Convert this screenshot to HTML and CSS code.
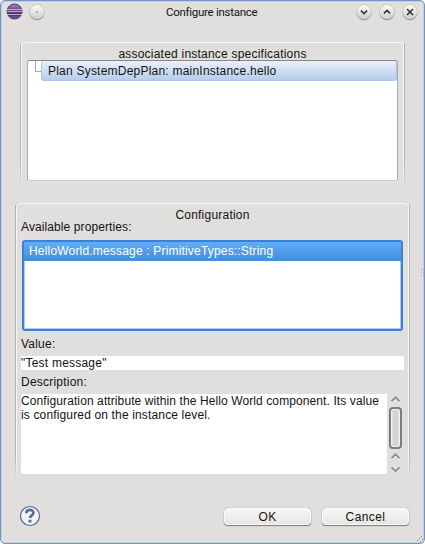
FILE: index.html
```
<!DOCTYPE html>
<html lang="en">
<head>
<meta charset="utf-8">
<title>Configure instance</title>
<link rel="stylesheet" href="styles.css">
</head>
<body>
<main class="window">
  <header class="titlebar">
    <svg class="logo" width="17" height="17" viewBox="0 0 17 17">
      <defs><linearGradient id="orb" x1="0" y1="0" x2="0" y2="1"><stop offset="0" stop-color="#a88fc0"/><stop offset=".35" stop-color="#6a4c90"/><stop offset=".7" stop-color="#4c2d6b"/><stop offset="1" stop-color="#8464a0"/></linearGradient></defs>
      <circle cx="8.5" cy="8.5" r="7.5" fill="url(#orb)" stroke="#4c2c63"/>
      <path d="M1 6.5h15M1 8.5h15M1 11.5h15" stroke="#c9bcdb" stroke-width=".9"/>
    </svg>
    <span class="round"><svg width="15" height="15" viewBox="0 0 15 15"><circle cx="7.5" cy="7.5" r=".8" fill="#555"/></svg></span>
    <h1 class="title">Configure instance</h1>
    <span class="round"><svg width="15" height="15" viewBox="0 0 15 15"><path d="M4.2 6l3.3 3.3 3.3-3.3"/></svg></span>
    <span class="round"><svg width="15" height="15" viewBox="0 0 15 15"><path d="M4.2 9l3.3-3.3 3.3 3.3"/></svg></span>
    <span class="round"><svg width="15" height="15" viewBox="0 0 15 15"><path d="M4.3 4.3l6.4 6.4M10.7 4.3l-6.4 6.4"/></svg></span>
  </header>

  <section class="group specs">
    <h2 class="heading">associated instance specifications</h2>
    <div class="tree">
      <span class="branch"></span>
      <div class="tree-item">Plan SystemDepPlan: mainInstance.hello</div>
    </div>
  </section>

  <section class="group config">
    <h2 class="heading config-heading">Configuration</h2>
    <div class="label available">Available properties:</div>
    <div class="list"><div class="list-item">HelloWorld.message : PrimitiveTypes::String</div></div>
    <div class="label value-label">Value:</div>
    <div class="input">"Test message"</div>
    <div class="label desc-label">Description:</div>
    <div class="desc">
      <div class="textarea"><div class="line1">Configuration attribute within the Hello World component. Its value</div><div class="line2">is configured on the instance level.</div></div>
      <div class="scroll">
        <svg class="arrow" width="11" height="7" viewBox="0 0 11 7"><path class="lite" d="M1.5 6.3l4-4 4 4"/><path d="M1.5 5.3l4-4 4 4"/></svg>
        <div class="thumb"></div>
        <svg class="arrow" width="11" height="7" viewBox="0 0 11 7"><path class="lite" d="M1.5 6.3l4-4 4 4"/><path d="M1.5 5.3l4-4 4 4"/></svg>
        <svg class="arrow down" width="11" height="7" viewBox="0 0 11 7"><path class="lite" d="M1.5 2.3l4 4 4-4"/><path d="M1.5 1.3l4 4 4-4"/></svg>
      </div>
    </div>
  </section>

  <footer class="footer">
    <svg class="help" width="22" height="22" viewBox="0 0 22 22">
      <circle cx="11" cy="11" r="9.5" fill="#f4f4f5" stroke="#546a90" stroke-width="1.2"/>
      <path d="M7.3 8.2C7.3 3.8 14.4 3.8 14.4 7.8C14.4 10.5 11 10.2 11 13" fill="none" stroke="#586e9a" stroke-width="2.7"/>
      <path d="M9.5 14.7h3v2.8h-3z" fill="#586e9a"/>
    </svg>
    <div class="button">OK</div>
    <div class="button cancel">Cancel</div>
  </footer>
  <svg class="grip-side" width="4" height="10" viewBox="0 0 4 10"><path d="M0 1h1M0 4h1M0 7h1M2 2h1M2 5h1M2 8h1" stroke="#999"/></svg>
  <svg class="grip" width="8" height="8" viewBox="0 0 8 8"><path d="M5 1.5h1M3 3.5h1M6 4.5h1M1 5.5h1M4 6.5h1" stroke="#888"/></svg>
</main>
</body>
</html>
```
FILE: styles.css
```
* { box-sizing: border-box; }
body {
  margin: 0;
  background: #fff;
  color: #141312;
  font: 12px/14px "Liberation Sans", Arial, sans-serif;
  letter-spacing: .22px;
  white-space: nowrap;
}
svg { display: block; flex: none; }
h1, h2 { margin: 0; font: inherit; }
.window {
  position: relative;
  width: 425px;
  height: 544px;
  border: 1px solid #7094c6;
  border-radius: 5px;
  background: #e0dfdd;
  box-shadow: inset 0 0 0 .5px #a9bddb;
  overflow: hidden;
}
.titlebar { display: flex; align-items: center; height: 21px; padding: 0 7px 0 5px; }
.round {
  flex: none;
  width: 14px;
  height: 14px;
  border-radius: 50%;
  background: linear-gradient(#fbfbfb, #cfcecc);
  box-shadow: 0 0 0 .5px #aaa, 0 1px 1px #777;
}
.round svg { width: 14px; height: 14px; }
.round path { fill: none; stroke: #333; stroke-width: 1.7; }
.logo + .round { margin-left: 7px; margin-right: 9px; }
.title ~ .round + .round { margin-left: 9px; }
.title { flex: 1; padding-left: 113px; font: 11.5px/14px Roboto, sans-serif; letter-spacing: -.28px; }
.group {
  position: relative;
  border: 1px solid #f7f7f6;
  border-bottom: 0;
  border-radius: 5px 5px 0 0;
}
.group::before {
  content: "";
  position: absolute;
  inset: 1px -2px 0;
  border: solid #b6b5b3;
  border-width: 0 1px;
}
.group::after {
  content: "";
  position: absolute;
  inset: auto -2px 0;
  height: 24px;
  background: linear-gradient(#e0dfdd00, #e0dfdd) left / 3px 100% no-repeat, linear-gradient(#e0dfdd00, #e0dfdd) right / 3px 100% no-repeat;
}
.specs { margin: 20px 20px 0 20px; height: 146px; padding: 4px 5px 0 5px; }
.heading { text-align: center; }
.tree {
  display: flex;
  height: 121px;
  margin-top: -1px;
  border: 1px solid #aaa9a7;
  border-top-color: #888785;
  border-bottom-color: #cccbc9;
  border-radius: 3px;
  background: #fff;
}
.branch { width: 6px; height: 11px; margin-left: 7px; border: solid #aaa; border-width: 0 0 1px 1px; }
.tree-item {
  flex: 1;
  height: 20px;
  padding: 3px 6px;
  border: 1px solid #a9c5eb;
  border-top: 0;
  border-radius: 3px;
  background: linear-gradient(#eaf1fc, #b5cdec);
}
.config { margin: 15px 15px 0 15px; height: 277px; padding: 4px 4px 0 4px; }
.available { margin-top: -2px; letter-spacing: .1px; }
.list {
  height: 91px;
  margin: 6px 1px 0;
  border: 2px solid #3c82d2;
  border-radius: 3px;
  background: #fff;
  box-shadow: inset 0 0 0 1px #a9cdf4;
}
.list-item { height: 19px; padding: 2px 5px; color: #fff; background: linear-gradient(#61adfa, #438cd8); letter-spacing: .18px; }
.value-label { margin-top: 6px; }
.input { height: 14px; margin-top: 5px; background: #fff; }
.desc-label { margin-top: 5px; }
.desc { display: flex; margin-top: 5px; }
.textarea { width: 366px; height: 80px; background: #fff; }
.line1 { letter-spacing: .1px; }
.line2 { letter-spacing: .15px; }
.scroll { display: flex; flex-direction: column; align-items: center; width: 17px; padding-top: 2px; }
.arrow path { fill: none; stroke: #8b8a88; stroke-width: 1.7; }
.arrow .lite { stroke: #f5f5f4; }
.thumb {
  width: 13px;
  height: 42px;
  margin: 4px 0;
  border: 2px solid #7d7c7a;
  border-radius: 4px;
  background: linear-gradient(90deg, #e5e4e2, #d0cfcd, #e5e4e2);
  box-shadow: inset 0 0 0 1px #f3f3f2;
}
.down { margin-top: 6px; }
.footer { display: flex; align-items: center; padding: 0 15px 0 18px; margin-top: 25px; height: 22px; }
.button {
  width: 87px;
  height: 17px;
  margin-left: 11px;
  border: 1px solid #fafafa;
  border-radius: 4px;
  text-align: center;
  line-height: 17px;
  letter-spacing: .4px;
  background: linear-gradient(#f6f6f5, #e6e5e3);
  box-shadow: 0 1px 1px #777, 0 0 1px #777;
}
.help + .button { margin-left: auto; }
.grip-side { position: absolute; right: -1px; top: 267px; }
.grip { position: absolute; right: 0; bottom: 0; }
```
